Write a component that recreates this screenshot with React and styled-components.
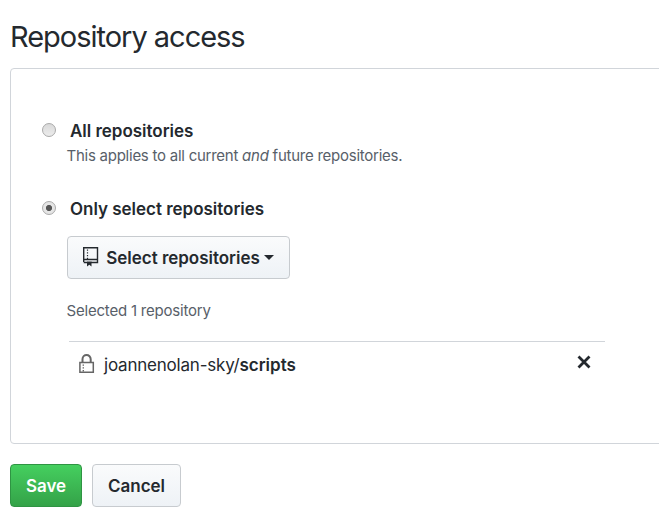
import React from 'react';
import styled, { createGlobalStyle } from 'styled-components';

const GlobalStyle = createGlobalStyle`
  * { box-sizing: border-box; }
  body {
    margin: 0;
    background: #fff;
    color: #24292e;
    font-family: Inter, Roboto, sans-serif;
    font-size: 17px;
    overflow: hidden;
  }
`;

const Page = styled.main`
  padding: 16px 0 0 10px;
`;

const Title = styled.h2`
  margin: 0 0 10px;
  font-size: 29px;
  font-weight: 400;
  line-height: 42px;
  letter-spacing: -1.02px;
`;

const Panel = styled.section`
  height: 376px;
  margin-right: -6px;
  padding: 49px 0 0 31px;
  border: 1px solid #d1d5da;
  border-radius: 4px;
`;

const Option = styled.label`
  display: flex;
  align-items: center;
  gap: 14px;
  height: 26px;
  font-weight: 600;
  letter-spacing: -0.02px;
`;

const Radio = styled.input`
  appearance: none;
  flex: none;
  width: 14px;
  height: 14px;
  margin: 0 0 2px;
  border: 1px solid #a9a9a9;
  border-radius: 50%;
  background: linear-gradient(#d9d9d9, #ececec);

  &:checked {
    background: radial-gradient(circle, #555 0 2.7px, #e5e5e5 3.5px);
  }
`;

const Note = styled.p`
  margin: ${(p) => p.$top || 0}px 0 0 24.5px;
  color: #586069;
  font-size: 15px;
  line-height: 24px;
  letter-spacing: ${(p) => p.$tracking || -0.25}px;
  white-space: nowrap;
`;

const Choice = styled.div`
  margin-bottom: ${(p) => p.$gap || 0}px;
`;

const Button = styled.button`
  display: inline-flex;
  align-items: center;
  justify-content: center;
  width: ${(p) => p.$width}px;
  height: 43px;
  padding: 0;
  border: 1px solid ${(p) => (p.$primary ? '#2f9443' : '#c7cbcf')};
  border-radius: 4px;
  background: ${(p) =>
    p.$primary
      ? 'linear-gradient(#45cf5f, #34a248)'
      : 'linear-gradient(#fafbfc, #eef2f6)'};
  color: ${(p) => (p.$primary ? '#fff' : '#24292e')};
  font: 600 17px Inter, Roboto, sans-serif;
  letter-spacing: -0.02px;
`;

const Picker = styled.div`
  margin: 14px 0 0 25px;

  svg { flex: none; }
`;

const PickerLabel = styled.span`
  margin: 0 4px 0 7px;
`;

const List = styled.ul`
  width: 536px;
  margin: 18px 0 0 27px;
  padding: 0;
  border-top: 1px solid #d1d5da;
  list-style: none;
`;

const Repo = styled.li`
  display: flex;
  align-items: center;
  height: 46px;
  padding: 0 13px 0 10px;
`;

const RepoName = styled.span`
  flex: 1;
  margin-left: 9px;
  letter-spacing: -0.21px;

  b { font-weight: 600; letter-spacing: 0; }
`;

const Remove = styled.button`
  display: flex;
  margin: 0 1px 6px 0;
  padding: 0;
  border: 0;
  background: none;
`;

const Actions = styled.div`
  display: flex;
  gap: 10px;
  margin-top: 20px;
`;

const RepoMark = styled.svg`
  margin-bottom: 2px;
`;

const LockMark = styled.svg`
  margin-bottom: 2px;
`;

const RepoIcon = () => (
  <RepoMark width="16" height="20" viewBox="0 0 16 20" fill="none" stroke="#24292e">
    <path d="M.7 15V.7h13.8v14.8H8M.7 12.5h13.8M.7 15.5h3.5" strokeWidth="1.4" />
    <path d="M4.5 2.4v9.8" strokeWidth="1.2" strokeDasharray="1.3 1.5" />
    <path d="M4 14.5h4.5v5l-2.2-1.8L4 19.5z" fill="#24292e" stroke="none" />
  </RepoMark>
);

const LockIcon = () => (
  <LockMark width="16" height="20" viewBox="0 0 16 20" fill="none" stroke="#666">
    <path d="M3.5 9V5.2a4.1 4.1 0 0 1 8.2 0V9" strokeWidth="2" />
    <path d="M.9 8.5h13.4v9.8H.9z" strokeWidth="1.5" />
    <path d="M4.3 10.4v7.2" strokeWidth="1.4" strokeDasharray="1.4 1.4" />
  </LockMark>
);

const Caret = () => (
  <svg width="10" height="5" viewBox="0 0 10 5">
    <path d="M0 0h10L5 5z" fill="#24292e" />
  </svg>
);

const Cross = () => (
  <svg width="14" height="14" viewBox="0 0 14 14">
    <path d="M1.5 1.5l11 11M12.5 1.5l-11 11" stroke="#24292e" strokeWidth="2.8" />
  </svg>
);

export default function App() {
  return (
    <>
      <GlobalStyle />
      <Page>
        <Title>Repository access</Title>
        <Panel>
          <Choice $gap={28}>
            <Option>
              <Radio type="radio" name="access" />
              All repositories
            </Option>
            <Note>
              This applies to all current <em>and</em> future repositories.
            </Note>
          </Choice>
          <Choice>
            <Option>
              <Radio type="radio" name="access" defaultChecked />
              Only select repositories
            </Option>
            <Picker>
              <Button type="button" $width={223}>
                <RepoIcon />
                <PickerLabel>Select repositories</PickerLabel>
                <Caret />
              </Button>
            </Picker>
            <Note $top={20} $tracking={-0.2}>Selected 1 repository</Note>
            <List>
              <Repo>
                <LockIcon />
                <RepoName>joannenolan-sky/<b>scripts</b></RepoName>
                <Remove type="button" aria-label="Remove">
                  <Cross />
                </Remove>
              </Repo>
            </List>
          </Choice>
        </Panel>
        <Actions>
          <Button type="submit" $primary $width={72}>Save</Button>
          <Button type="button" $width={89}>Cancel</Button>
        </Actions>
      </Page>
    </>
  );
}
